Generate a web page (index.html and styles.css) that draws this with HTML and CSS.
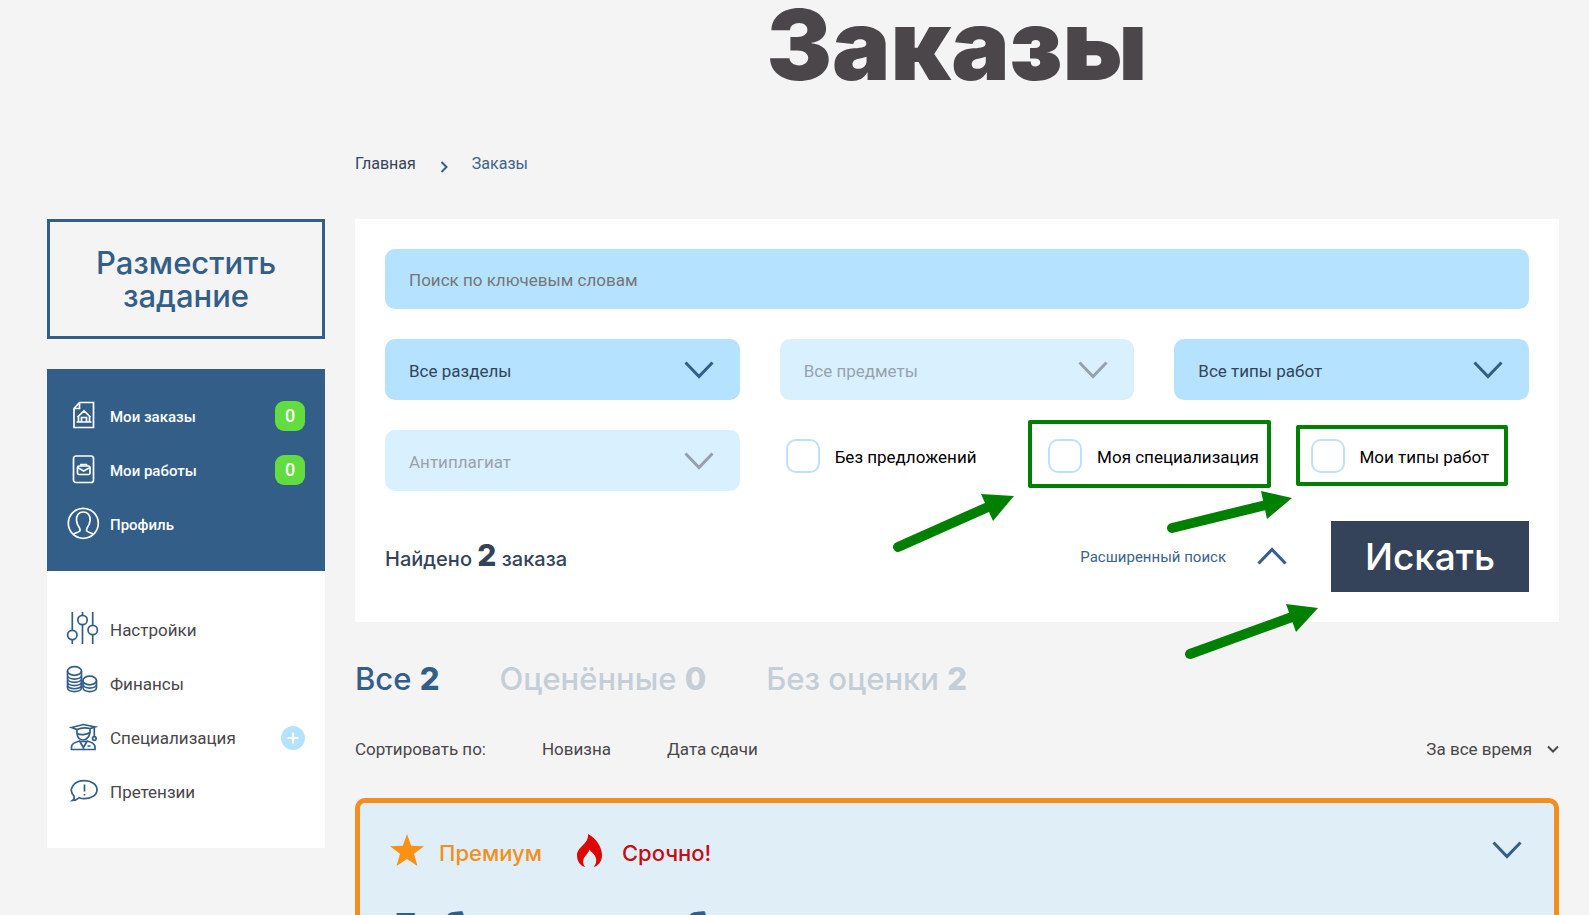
FILE: index.html
```html
<!DOCTYPE html>
<html lang="ru">
<head>
<meta charset="utf-8">
<title>Заказы</title>
<link rel="stylesheet" href="styles.css">
</head>
<body>
<div class="page">
  <aside class="sidebar">
    <button class="post-task" type="button">Разместить задание</button>
    <nav class="menu menu-primary">
      <a class="menu-item" href="#">
        <svg class="menu-icon" viewBox="0 0 32 32"><path d="M12.500 2.500H26.500V27.500H7V8.500Z M12.500 2.500V8.500H7"/><path d="M9.500 22H24.500M11.500 21.500V16.500L10.500 17L17 11L23.500 17L22.500 16.500V21.500M14.500 21.500V17.500H19.500V21.500"/></svg>
        <span class="menu-text">Мои заказы</span><span class="badge">0</span>
      </a>
      <a class="menu-item" href="#">
        <svg class="menu-icon" viewBox="0 0 32 32"><rect x="6.500" y="2" width="20" height="26.500" rx="2.500"/><rect x="10.500" y="12" width="12.500" height="8.500" rx="1.500"/><path d="M14 12V10.500H19.500V12M10.500 13.500L16.700 17L23 13.500"/></svg>
        <span class="menu-text">Мои работы</span><span class="badge">0</span>
      </a>
      <a class="menu-item" href="#">
        <svg class="menu-icon" viewBox="0 0 32 32"><circle cx="16.300" cy="15.300" r="15"/><path d="M6 26C9 25 12.500 24 13 22.500C13.500 21 12 19 10.500 16.500L9.500 12.500C9 7 12 4 16.300 4S23.600 7 23.100 12.500L22.100 16.500C20.600 19 19.100 21 19.600 22.500C20.100 24 23.600 25 26.600 26"/></svg>
        <span class="menu-text">Профиль</span>
      </a>
    </nav>
    <nav class="menu menu-secondary">
      <a class="menu-item" href="#">
        <svg class="menu-icon" viewBox="0 0 32 32"><path d="M5.300-2V16M5.300 26V30M15.500-2V1M15.500 11V30M25.700-2V11M25.700 21V30"/><circle cx="5.300" cy="21" r="4.700"/><circle cx="15.500" cy="6" r="4.700"/><circle cx="25.700" cy="16" r="4.700"/></svg>
        <span class="menu-text">Настройки</span>
      </a>
      <a class="menu-item" href="#">
        <svg class="menu-icon" viewBox="0 0 32 32"><ellipse cx="7.500" cy="3" rx="7" ry="4.300"/><path d="M.500 3V19.500C.500 25 14.500 25 14.500 19.500V3M.500 7C.500 12.500 14.500 12.500 14.500 7M.500 10.200C.500 15.700 14.500 15.700 14.500 10.200M.500 13.400C.500 18.900 14.500 18.900 14.500 13.400M.500 16.600C.500 22.100 14.500 22.100 14.500 16.600"/><ellipse cx="22.700" cy="12.500" rx="6.800" ry="4.300"/><path d="M16 12.500V19.500C16 25 29.500 25 29.500 19.500V12.500M16 16C16 21.500 29.500 21.500 29.500 16"/></svg>
        <span class="menu-text">Финансы</span>
      </a>
      <a class="menu-item" href="#">
        <svg class="menu-icon" viewBox="0 0 32 32"><path d="M4.500 5.500L16.500 2.500L28 5L23 6.500C19 5.500 14 5.500 10 7.500ZM10 7.500V11.500C13.500 13.300 19.500 13 23 10.500V6.500M10 11.500C10.500 16 13.500 18 16.400 18S22.500 15 23 10.500M27.300 5.500V14.500"/><circle cx="27.300" cy="16.500" r="1.800"/><path d="M4.500 27.500V24.500C5 21.500 8.500 20 12.500 19L16.400 25.500L20.300 19C24 20 27.500 21.500 28 24.500V27.500ZM13 19.500H20M16.400 25.500V27.500M20.500 24H23.500"/></svg>
        <span class="menu-text">Специализация</span>
        <svg class="plus" viewBox="0 0 24 24"><circle cx="12" cy="12" r="12"/><path d="M12 6.500V17.500M6.500 12H17.500"/></svg>
      </a>
      <a class="menu-item" href="#">
        <svg class="menu-icon" viewBox="0 0 32 32"><path d="M5.500 24.500C7.500 23 7.500 21.500 7 20C1 14 6 4.700 17.500 4.700C24.500 4.700 30 8.500 30 13.700S24.500 22.700 17.500 22.700C15 22.700 13.500 22.400 12 21.800C10 23.500 8 24.300 5.500 24.500ZM17.500 8.500V15.500M17.500 18V19.500"/></svg>
        <span class="menu-text">Претензии</span>
      </a>
    </nav>
  </aside>

  <main class="content">
    <h1 class="title">Заказы</h1>
    <div class="breadcrumbs">
      <a class="crumb" href="#">Главная</a>
      <svg class="crumb-arrow" viewBox="0 0 8 12"><path d="M1.500 1L6.500 6L1.500 11"/></svg>
      <a class="crumb crumb-current" href="#">Заказы</a>
    </div>

    <form class="filter">
      <input class="search" type="text" placeholder="Поиск по ключевым словам" aria-label="Поиск по ключевым словам">
      <div class="filter-grid">
        <div class="picker">
          <select class="select" aria-label="Раздел"><option>Все разделы</option></select>
          <svg class="chevron" viewBox="0 0 30 18"><path d="M1.500 1.500L15 15.500L28.500 1.500"/></svg>
        </div>
        <div class="picker picker-off">
          <select class="select" aria-label="Предмет" disabled><option>Все предметы</option></select>
          <svg class="chevron" viewBox="0 0 30 18"><path d="M1.500 1.500L15 15.500L28.500 1.500"/></svg>
        </div>
        <div class="picker">
          <select class="select" aria-label="Тип работы"><option>Все типы работ</option></select>
          <svg class="chevron" viewBox="0 0 30 18"><path d="M1.500 1.500L15 15.500L28.500 1.500"/></svg>
        </div>
        <div class="picker picker-off">
          <select class="select" aria-label="Антиплагиат" disabled><option>Антиплагиат</option></select>
          <svg class="chevron" viewBox="0 0 30 18"><path d="M1.500 1.500L15 15.500L28.500 1.500"/></svg>
        </div>
        <div class="checks">
          <label class="check"><input class="box" type="checkbox">Без предложений</label>
          <label class="check"><input class="box" type="checkbox">Моя специализация</label>
          <label class="check"><input class="box" type="checkbox">Мои типы работ</label>
        </div>
      </div>
      <div class="filter-footer">
        <p class="found">Найдено <b class="found-count">2</b> заказа</p>
        <button class="advanced" type="button">Расширенный поиск
          <svg class="chevron-up" viewBox="0 0 30 18"><path d="M1.500 15.500L15 1.500L28.500 15.500"/></svg>
        </button>
        <button class="submit" type="submit">Искать</button>
      </div>
      <svg class="marks" viewBox="0 0 640 260">
        <rect x="151" y="12" width="239" height="64"/>
        <rect x="419" y="17" width="208" height="57"/>
        <path class="shaft" d="M19 137L109 97M293 118L387 95M311 244L413 207"/>
        <path class="head" d="M102 84L135 86L114 111ZM382 81L413 88L388 109ZM407 194L439 198L417 222Z"/>
      </svg>
    </form>

    <div class="tabs">
      <a class="tab tab-active" href="#">Все <b>2</b></a>
      <a class="tab" href="#">Оценённые <b>0</b></a>
      <a class="tab" href="#">Без оценки <b>2</b></a>
    </div>

    <div class="sort">
      <span>Сортировать по:</span>
      <a class="sort-link" href="#">Новизна</a>
      <a class="sort-link" href="#">Дата сдачи</a>
      <button class="period" type="button">За все время
        <svg class="period-arrow" viewBox="0 0 12 8"><path d="M1 1.500L6 6.500L11 1.500"/></svg>
      </button>
    </div>

    <article class="order">
      <div class="order-head">
        <svg class="star" viewBox="0 0 34 32"><path d="M17 0L21.200 11.700L34 12.200L24 19.800L27.500 32L17 25L6.500 32L10 19.800L0 12.200L12.800 11.700Z"/></svg>
        <span class="tag premium">Премиум</span>
        <svg class="flame" viewBox="0 0 25 33"><path d="M11 0C19 4 25 13 25 21C25 28 21 32 16.500 33C19.500 30 20 26 18 22C16.500 19 13.500 18 12.500 15.500C11.500 19 9 20.500 7 24C5.500 27 6 31 8.500 33C3.500 32 0 28 0 21C0 13 12 10 11 0Z"/></svg>
        <span class="tag urgent">Срочно!</span>
        <svg class="order-chevron" viewBox="0 0 30 18"><path d="M1.500 1.500L15 15.500L28.500 1.500"/></svg>
      </div>
      <h2 class="order-title">Добавочная работа</h2>
    </article>
  </main>
</div>
</body>
</html>
```
FILE: styles.css
```css
* {
  box-sizing: border-box;
}

body {
  margin: 0;
  background: #f4f4f4;
  color: #4a464a;
  font: 17px/24px Roboto, "Liberation Sans", sans-serif;
}

a {
  color: inherit;
  text-decoration: none;
}

button,
input,
select {
  margin: 0;
  border: 0;
  font: inherit;
  color: inherit;
}

button {
  padding: 0;
  background: none;
  cursor: pointer;
}

svg {
  fill: none;
  stroke: #325e88;
  overflow: visible;
}

.page {
  display: grid;
  grid-template-columns: 278px minmax(0, 1fr);
  gap: 30px;
  height: 100vh;
  padding: 0 30px 0 47px;
  overflow: hidden;
}

.sidebar {
  padding-top: 219px;
}

.post-task {
  display: block;
  width: 100%;
  height: 120px;
  margin-bottom: 30px;
  padding: 0 32px;
  border: 3px solid #325e88;
  color: #325e88;
  font: 500 31px/33px Inter, sans-serif;
}

.menu-primary {
  padding: 20px;
  background: #325e88;
  color: #fff;
  font-size: 15px;
  font-weight: 500;
}

.menu-secondary {
  padding: 32px 20px 29px;
  background: #fff;
}

.menu-item {
  display: flex;
  align-items: center;
  height: 54px;
}

.menu-icon {
  width: 32px;
  height: 32px;
  margin-right: 11px;
  stroke-width: 1.7;
}

.menu-primary .menu-icon {
  stroke: #fff;
}

.menu-text {
  flex: 1;
}

.menu-primary .menu-text {
  padding-top: 2px;
}

.badge {
  width: 30px;
  border-radius: 9px;
  background: #62dc3e;
  font-size: 18px;
  line-height: 30px;
  text-align: center;
}

.plus {
  width: 24px;
  height: 24px;
  stroke: none;
}

.plus circle {
  fill: #b5e3ff;
}

.plus path {
  stroke: #fff;
  stroke-width: 2;
}

.title {
  margin: 0;
  height: 152px;
  font: 900 98px/90px Inter, sans-serif;
  text-align: center;
}

.breadcrumbs {
  display: flex;
  align-items: center;
  gap: 24px;
  height: 24px;
  margin-bottom: 43px;
  color: #34435a;
  font-size: 16px;
}

.crumb-current {
  color: #3d6388;
}

.crumb-arrow {
  width: 8px;
  height: 12px;
  margin-top: 5px;
  stroke-width: 2;
}

.filter {
  position: relative;
  padding: 30px;
  background: #fff;
}

.search {
  display: block;
  width: 100%;
  height: 60px;
  margin-bottom: 30px;
  padding: 2px 24px 0;
  border-radius: 10px;
  background: #b5e3ff;
}

.search::placeholder {
  color: #757575;
  opacity: 1;
}

.filter-grid {
  display: grid;
  grid-template-columns: repeat(3, 1fr);
  gap: 30px 40px;
  margin-bottom: 30px;
}

.picker {
  position: relative;
}

.picker-off {
  opacity: .5;
}

.select {
  display: block;
  width: 100%;
  height: 61px;
  padding: 2px 24px 0;
  border-radius: 10px;
  background: #b5e3ff;
  color: #34435a;
  opacity: 1;
  appearance: none;
}

.chevron {
  position: absolute;
  top: 22px;
  right: 26px;
  width: 30px;
  height: 18px;
  stroke-width: 3;
  pointer-events: none;
}

.picker-off .chevron {
  stroke: #34435a;
}

.checks {
  display: grid;
  grid-column: span 2;
  grid-template-columns: repeat(3, 1fr);
  gap: 44px;
  padding: 9px 0 0 6px;
}

.check {
  display: flex;
  gap: 15px;
  color: #000;
  line-height: 36px;
  white-space: nowrap;
}

.box {
  width: 34px;
  height: 34px;
  border: 2px solid #c0e0fa;
  border-radius: 10px;
  background: #fff;
  appearance: none;
}

.filter-footer {
  display: flex;
  align-items: center;
}

.found {
  flex: 1;
  margin: 0;
  color: #34435a;
  font: 500 20px/30px Inter, sans-serif;
}

.found-count {
  font-size: 30px;
  font-weight: 800;
}

.advanced {
  display: flex;
  align-items: center;
  gap: 31px;
  margin-right: 44px;
  color: #3d6388;
  font-size: 15px;
}

.chevron-up {
  width: 30px;
  height: 18px;
  stroke-width: 3;
}

.submit {
  width: 198px;
  height: 71px;
  background: #34435a;
  color: #fff;
  font: 500 37px/40px Inter, sans-serif;
}

.marks {
  position: absolute;
  top: 191px;
  right: 40px;
  width: 640px;
  height: 260px;
  stroke: #008000;
  stroke-width: 4;
  stroke-linejoin: round;
  pointer-events: none;
}

.shaft {
  stroke-width: 10;
  stroke-linecap: round;
}

.head {
  fill: #008000;
  stroke: none;
}

.tabs {
  display: flex;
  gap: 60px;
  padding: 39px 0 37px;
  font: 500 31px/36px Inter, sans-serif;
}

.tab {
  color: #c3ced7;
}

.tab b {
  font-weight: 800;
}

.tab-active {
  color: #325e88;
}

.sort {
  display: flex;
  gap: 56px;
  height: 30px;
  margin-bottom: 34px;
  line-height: 30px;
}

.period {
  display: flex;
  align-items: center;
  gap: 15px;
  margin-left: auto;
}

.period-arrow {
  width: 12px;
  height: 8px;
  stroke: #4a464a;
  stroke-width: 2;
}

.order {
  padding: 30px 32px 30px 30px;
  border: 5px solid #f28f1e;
  border-radius: 10px;
  background: #e0eff7;
}

.order-head {
  display: flex;
  align-items: center;
  height: 34px;
  font: 500 22px/28px Inter, sans-serif;
}

.star {
  width: 34px;
  height: 32px;
  margin-right: 15px;
  fill: #f99114;
  stroke: none;
}

.tag {
  padding-top: 6px;
}

.premium {
  margin-right: 35px;
  color: #f28f1e;
}

.flame {
  width: 25px;
  height: 33px;
  margin-right: 20px;
  fill: #dc0808;
  stroke: none;
}

.urgent {
  color: #c40d14;
}

.order-chevron {
  width: 30px;
  height: 18px;
  margin-left: auto;
  stroke-width: 3;
}

.order-title {
  margin: 39px 0 0;
  color: #325e88;
  font: 700 34px/40px "DejaVu Sans", sans-serif;
}
```
